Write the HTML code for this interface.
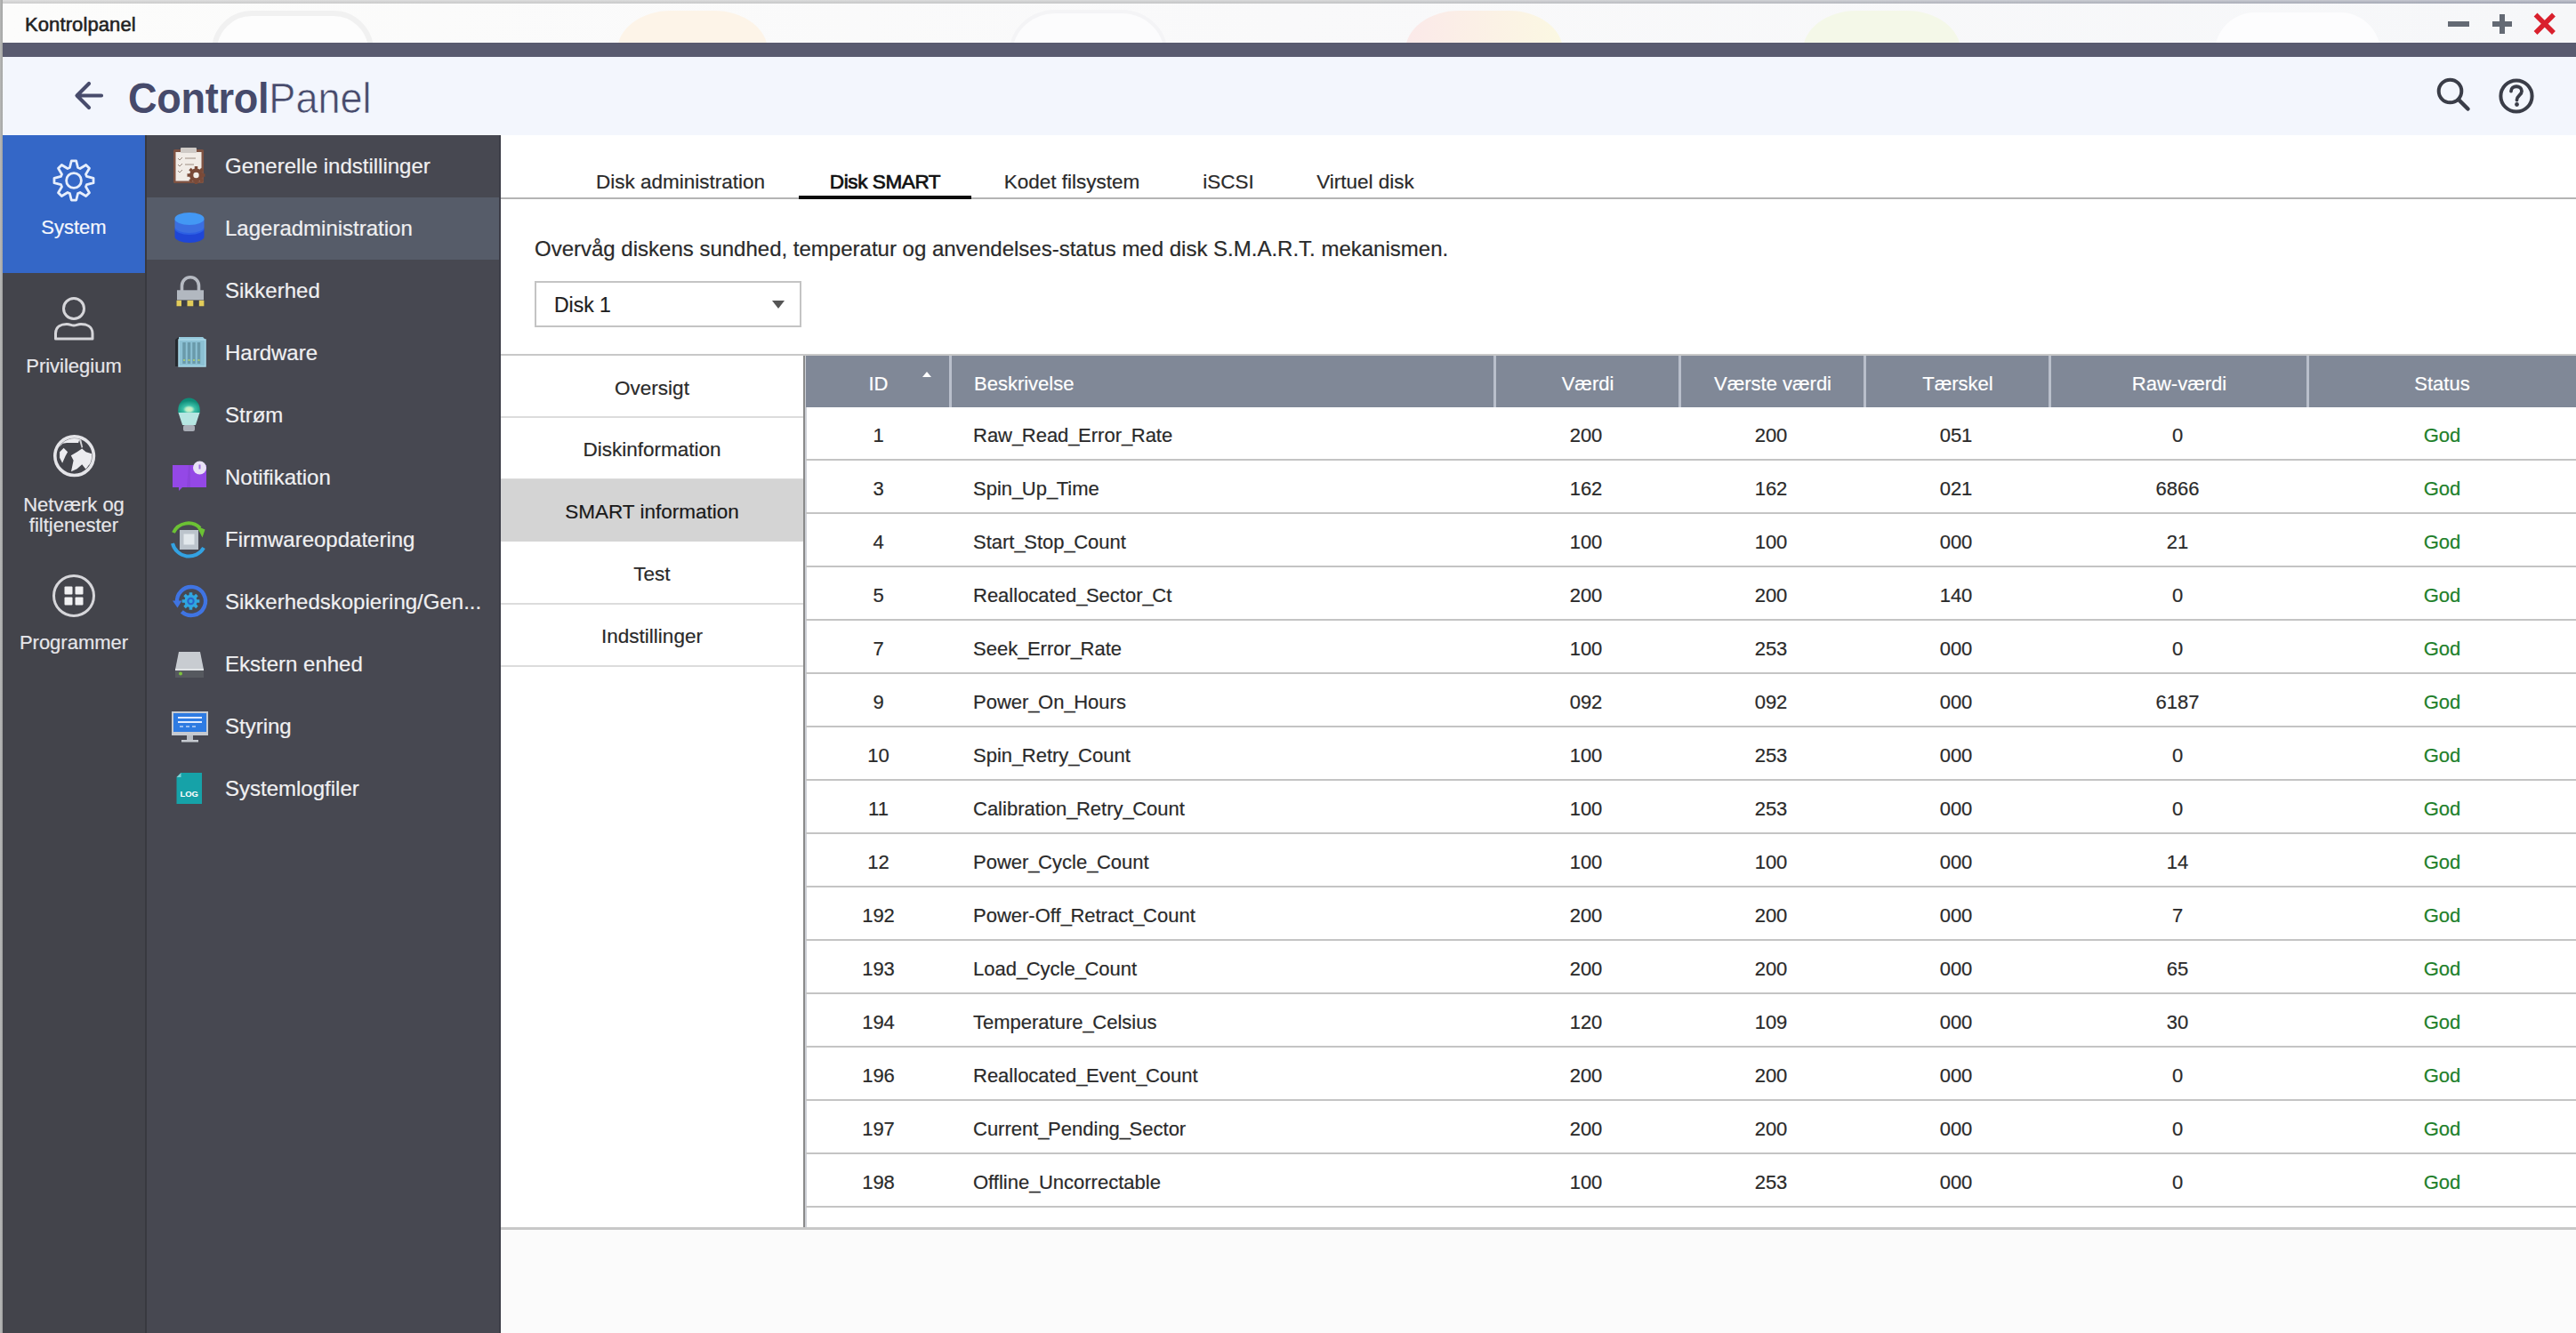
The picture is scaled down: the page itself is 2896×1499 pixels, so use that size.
<!DOCTYPE html>
<html><head><meta charset="utf-8">
<style>
*{margin:0;padding:0;box-sizing:border-box}
html,body{width:2896px;height:1499px;overflow:hidden;background:#c4c6c6;font-family:"Liberation Sans",sans-serif;color:#262626}
.abs{position:absolute}
#topstrip{left:0;top:0;width:2896px;height:4px;background:linear-gradient(180deg,rgba(255,255,255,0.35),rgba(255,255,255,0) 80%),linear-gradient(90deg,#cfcfcf 0%,#c6c7c8 50%,#a4a8b6 100%)}
#leftstrip{left:0;top:0;width:3px;height:1499px;background:linear-gradient(90deg,#b8b9b8,#a2a3a2)}
#titlebar{left:3px;top:4px;width:2893px;height:44px;background:linear-gradient(90deg,#fcfcfb 0%,#f9f9fa 50%,#f6f7f9 100%)}
#titletext{left:28px;top:14px;font-size:22px;line-height:28px;color:#222;letter-spacing:0.1px;-webkit-text-stroke:0.55px #222}
#darkbar{left:3px;top:48px;width:2893px;height:16px;background:#595b70}
#header{left:3px;top:64px;width:2893px;height:88px;background:#f3f6fd}
#cp{left:144px;top:82px;font-size:49px;line-height:56px;color:#464a6b;white-space:nowrap;transform:scaleX(0.92);transform-origin:0 0}
#cp b{letter-spacing:-0.3px;-webkit-text-stroke:0}
#cp span{letter-spacing:0px;margin-left:0px;-webkit-text-stroke:0.7px #f3f6fd}
#side1{left:3px;top:152px;width:160px;height:1347px;background:#43444b}
#sysblock{left:3px;top:152px;width:160px;height:155px;background:#3467c7}
#side2{left:165px;top:152px;width:398px;height:1347px;background:#474851}
#side1edge{left:163px;top:152px;width:2px;height:1347px;background:#38393f}
#side2edge{left:561px;top:152px;width:2px;height:1347px;background:#3c3d47}
.s1t{position:absolute;left:3px;width:160px;text-align:center;color:#e6e6ea;font-size:22px;line-height:23px;white-space:nowrap}
.s2row{position:absolute;left:163px;width:400px;height:70px}
.s2row .t{position:absolute;left:90px;top:0;line-height:70px;font-size:24px;color:#f0f0f2;white-space:nowrap}
.s2row svg{position:absolute;left:27px;top:13px}
#content{left:563px;top:152px;width:2333px;height:1230px;background:#fff}
#bottomarea{left:563px;top:1382px;width:2333px;height:117px;background:#fbfbfb}
.tab{position:absolute;top:190px;width:300px;text-align:center;font-size:22.5px;line-height:30px;color:#2a2a2a;white-space:nowrap}
#tabline{left:563px;top:222px;width:2333px;height:2px;background:#b4b4b4}
#tabactive{left:898px;top:220px;width:194px;height:4px;background:#0a0a0a}
#desc{left:601px;top:265px;font-size:24px;line-height:30px;color:#2a2a2a;white-space:nowrap}
#dd{left:601px;top:316px;width:300px;height:52px;border:2px solid #c4c4c4;background:#fff}
#ddtext{left:623px;top:328px;font-size:23px;line-height:30px;color:#1e1e1e}
#ddarrow{left:868px;top:338px;width:0;height:0;border-left:7.5px solid transparent;border-right:7.5px solid transparent;border-top:9px solid #555}
#toplinecontent{left:563px;top:398px;width:2333px;height:2px;background:#c8c8c8}
.lp{position:absolute;left:563px;width:340px;height:70px;padding-top:2px;text-align:center;font-size:22.5px;line-height:70px;color:#2a2a2a;white-space:nowrap}
.lpsep{position:absolute;left:563px;width:340px;height:2px;background:#dcdcdc}
#vline1{left:903px;top:400px;width:2px;height:982px;background:#8a8a8a}
#vline2{left:905px;top:400px;width:2px;height:982px;background:#cdd0d6}
#bottomline{left:563px;top:1380px;width:2333px;height:3px;background:#c8c8c8}
#thead{left:906px;top:400px;width:1990px;height:58px;background:#808897}
#thead .hc,#thead .hl{position:absolute;top:3px;height:57px;line-height:57px;font-size:22px;color:#fff;white-space:nowrap}
#thead .hc{text-align:center}
#thead .hl{padding-left:26px}
#thead .hsep{position:absolute;top:0;width:3px;height:58px;background:#b9bfcb}
#sortarrow{position:absolute;left:131px;top:18px;width:0;height:0;border-left:5px solid transparent;border-right:5px solid transparent;border-bottom:6px solid #fff}
.trow{left:906px;width:1990px;height:60px;border-bottom:2px solid #c4c4c4}
.trow .cc,.trow .cl{position:absolute;top:2px;height:58px;line-height:60px;font-size:22px;color:#2a2a2a;white-space:nowrap}
.trow .cc{text-align:center}
.trow .cl{padding-left:25px}
.trow .god{color:#21802a}

.u{letter-spacing:-1.5px}

body{-webkit-text-stroke:0.2px currentColor}

</style></head><body>
<div id="topstrip" class="abs"></div>
<div id="leftstrip" class="abs"></div>
<div id="titlebar" class="abs"></div>
<svg class="abs" style="left:3px;top:4px" width="2893" height="44" viewBox="3 4 2893 44">
 <rect x="241" y="15" width="176" height="90" rx="42" fill="#fdfdfd" stroke="#f1f1f1" stroke-width="6"/>
 <rect x="694" y="12" width="169" height="90" rx="60" fill="#fdf4e8"/>
 <rect x="1137" y="13" width="173" height="90" rx="50" fill="#fcfcfd" stroke="#f4f4f6" stroke-width="4"/>
 <defs><linearGradient id="gry" x1="0" x2="1"><stop offset="0" stop-color="#fbe9e9"/><stop offset="1" stop-color="#fbf8e2"/></linearGradient></defs>
 <rect x="1580" y="12" width="177" height="90" rx="60" fill="url(#gry)"/>
 <rect x="2027" y="12" width="177" height="90" rx="60" fill="#f4f8e8"/>
 <rect x="2490" y="14" width="186" height="90" rx="45" fill="#fdfdfe"/>
</svg>
<div id="titletext" class="abs">Kontrolpanel</div>
<svg class="abs" style="left:2740px;top:8px" width="150" height="40" viewBox="2740 8 150 40">
 <rect x="2752" y="24" width="24" height="6" fill="#646a74"/>
 <rect x="2802" y="24" width="22" height="6" fill="#646a74"/>
 <rect x="2810" y="16" width="6" height="22" fill="#646a74"/>
 <path d="M2852.5 18.5 L2869 35 M2869 18.5 L2852.5 35" stroke="#d9202d" stroke-width="5.5" stroke-linecap="square"/>
</svg>
<div id="darkbar" class="abs"></div>
<div id="header" class="abs"></div>
<svg class="abs" style="left:70px;top:80px" width="60" height="56" viewBox="70 80 60 56">
 <path d="M114 107.5 H87 M100 94 L86.5 107.5 L100 121" stroke="#484c6c" stroke-width="4.2" fill="none" stroke-linecap="round" stroke-linejoin="round"/>
</svg>
<div id="cp" class="abs"><b>Control</b><span>Panel</span></div>
<svg class="abs" style="left:2720px;top:75px" width="150" height="65" viewBox="2720 75 150 65">
 <circle cx="2754.5" cy="102.5" r="12.8" stroke="#3a3d48" stroke-width="4" fill="none"/>
 <path d="M2764 112 L2774.5 122.5" stroke="#3a3d48" stroke-width="4.5" stroke-linecap="round"/>
 <circle cx="2829" cy="108" r="17.6" stroke="#3a3d48" stroke-width="4" fill="none"/>
 <path d="M2823 102.5 C2823 95.5 2835 95.5 2835 102.5 C2835 107 2829.5 107.5 2829.5 112.5" stroke="#3a3d48" stroke-width="3.8" fill="none" stroke-linecap="round"/>
 <circle cx="2829.5" cy="117.5" r="2.4" fill="#3a3d48"/>
</svg>
<div id="side1" class="abs"></div>
<div id="sysblock" class="abs"></div>
<svg class="abs" style="left:53px;top:173px" width="60" height="60" viewBox="-30 -30 60 60">
 <path id="gearp" d="M-4.57 -14.50 L-2.71 -22.03 L2.71 -22.03 L4.57 -14.50 L7.02 -13.48 L13.67 -17.49 L17.49 -13.67 L13.48 -7.02 L14.50 -4.57 L22.03 -2.71 L22.03 2.71 L14.50 4.57 L13.48 7.02 L17.49 13.67 L13.67 17.49 L7.02 13.48 L4.57 14.50 L2.71 22.03 L-2.71 22.03 L-4.57 14.50 L-7.02 13.48 L-13.67 17.49 L-17.49 13.67 L-13.48 7.02 L-14.50 4.57 L-22.03 2.71 L-22.03 -2.71 L-14.50 -4.57 L-13.48 -7.02 L-17.49 -13.67 L-13.67 -17.49 L-7.02 -13.48 Z" fill="none" stroke="#e6eefc" stroke-width="2.8" stroke-linejoin="round"/>
 <circle cx="0" cy="0" r="8.4" fill="none" stroke="#e6eefc" stroke-width="2.8"/>
</svg>
<div class="s1t" style="top:244px;color:#f4f7fd">System</div>
<svg class="abs" style="left:53px;top:325px" width="60" height="65" viewBox="0 0 60 65">
 <circle cx="30" cy="22" r="11.5" fill="none" stroke="#d6d6da" stroke-width="3"/>
 <path d="M9.5 56 V50 C9.5 42 16 39.5 22 39.5 C26 39.5 27 41 30 41 C33 41 34 39.5 38 39.5 C44 39.5 51 42 51 50 V56 Z" fill="none" stroke="#d6d6da" stroke-width="3" stroke-linejoin="round"/>
</svg>
<div class="s1t" style="top:400px">Privilegium</div>
<svg class="abs" style="left:53px;top:483px" width="60" height="60" viewBox="-30.6 -29.7 60 60">
 <defs><clipPath id="gclip"><circle cx="0" cy="0" r="19.6"/></clipPath></defs>
 <circle cx="0" cy="0" r="21.8" fill="none" stroke="#e4e4e8" stroke-width="3.6"/>
 <g clip-path="url(#gclip)" fill="#ececf0">
  <path d="M-22 -10 L-16.5 -10.5 L-13 -14 L-8.5 -14.8 L4.5 -14.8 L6.5 -21 L-22 -21 Z"/>
  <path d="M4.5 -21 L7 -21 L9.5 -10 L8.2 -8.6 Z" opacity="0.85"/>
  <path d="M-16.5 -4.5 L-12 -9 L-7.5 -4.5 L-10 0 L-13.5 8 L-16.5 2 Z"/>
  <path d="M-3.8 -0.5 L3 -4.5 L8.6 -8.3 L13 -4.5 L21 -2 L21 8 L16 10.5 L13 15 L8.6 9.5 L3 14.5 L-3.6 17.5 L-1 5 Z"/>
 </g>
</svg>
<div class="s1t" style="top:556px">Netværk og</div>
<div class="s1t" style="top:579px">filtjenester</div>
<svg class="abs" style="left:53px;top:640px" width="60" height="60" viewBox="-30 -30 60 60">
 <circle cx="0" cy="0" r="22.5" fill="none" stroke="#d6d6da" stroke-width="3"/>
 <rect x="-10.5" y="-10.5" width="9" height="9" rx="1" fill="#f0f0f2"/>
 <rect x="1.5" y="-10.5" width="9" height="9" rx="1" fill="#f0f0f2"/>
 <rect x="-10.5" y="1.5" width="9" height="9" rx="1" fill="#f0f0f2"/>
 <rect x="1.5" y="1.5" width="9" height="9" rx="1" fill="#f0f0f2"/>
</svg>
<div class="s1t" style="top:711px">Programmer</div>
<div id="side2" class="abs"></div>
<div class="s2row" style="top:222px;background:#565c69"></div>
<!--S2ROWS-->
<div class="s2row" style="top:152px"><svg width="46" height="44" viewBox="0 0 46 44"><rect x="5" y="3" width="34" height="38" rx="1.5" fill="#7d5242"/><rect x="7.5" y="6" width="29" height="32.5" fill="#f1ece7"/><rect x="13" y="1" width="18" height="6" rx="1" fill="#cfcac6"/>
<path d="M10 13 l2 2 l3 -3 M10 20 l2 2 l3 -3 M10 27 l2 2 l3 -3" stroke="#9a8a80" stroke-width="1" fill="none"/><path d="M18 13 h12 M18 20 h10" stroke="#b9aca4" stroke-width="1.5"/>
<g transform="translate(30.5,32)"><circle r="7.5" fill="#7a4a38"/><path d="M0 -10 V10 M-10 0 H10 M-7 -7 L7 7 M7 -7 L-7 7" stroke="#7a4a38" stroke-width="3.5"/><circle r="3.2" fill="#f3eee9"/></g></svg><div class="t">Generelle indstillinger</div></div>
<div class="s2row" style="top:222px"><svg width="46" height="44" viewBox="0 0 46 44"><path d="M6.5 22 v9 a16.5 7 0 0 0 33 0 v-9 z" fill="#1f46d6"/><ellipse cx="23" cy="22" rx="16.5" ry="7" fill="#2c5fe3"/><path d="M6.5 11 v9 a16.5 7 0 0 0 33 0 v-9 z" fill="#3b6ee0"/><ellipse cx="23" cy="11" rx="16.5" ry="7" fill="#4398f4"/></svg><div class="t">Lageradministration</div></div>
<div class="s2row" style="top:292px"><svg width="46" height="44" viewBox="0 0 46 44"><path d="M14.5 22 V16.25 a9.5 9.5 0 0 1 19 0 V22" stroke="#b6bac2" stroke-width="3.6" fill="none"/><rect x="9" y="21.3" width="30" height="11.5" fill="#b2b8c0"/><rect x="8.5" y="32.5" width="31" height="7" fill="#3e3f45"/><rect x="8.5" y="32.8" width="5.5" height="6.5" fill="#e2cc5a"/><rect x="20.5" y="32.8" width="6.8" height="6.5" fill="#e2cc5a"/><rect x="33.8" y="32.8" width="5.6" height="6.5" fill="#e2cc5a"/></svg><div class="t">Sikkerhed</div></div>
<div class="s2row" style="top:362px"><svg width="46" height="44" viewBox="0 0 46 44"><path d="M11 4 h27 l3 3 v30 h-30 z" fill="#96cadd"/><path d="M7 7 l4 -3 v33 h-4 z" fill="#25292e"/><rect x="11" y="7" width="30" height="30" fill="#8cc1d4" stroke="#a9d8e8" stroke-width="1.5"/><path d="M17 10 v24 M22.5 10 v24 M28 10 v24 M33.5 10 v24" stroke="#6a9aaa" stroke-width="3.5"/><path d="M16 30 h20" stroke="#b9d66a" stroke-width="1.5" stroke-dasharray="2 3.5"/></svg><div class="t">Hardware</div></div>
<div class="s2row" style="top:432px"><svg width="46" height="44" viewBox="0 0 46 44"><defs><radialGradient id="bulbg" cx="0.5" cy="0.78" r="0.6"><stop offset="0" stop-color="#d8f0c0"/><stop offset="0.25" stop-color="#b8ecc8"/><stop offset="0.45" stop-color="#3cc0a8"/><stop offset="1" stop-color="#0f8c78"/></radialGradient></defs><path d="M10.2 19 V16 A12.3 13.5 0 0 1 34.8 16 V19 z" fill="url(#bulbg)"/><path d="M10.5 19 h24 l-4.6 14 h-14.8 z" fill="#b6e6e2"/><rect x="16" y="33" width="13" height="7" rx="2" fill="#a8adb6"/></svg><div class="t">Strøm</div></div>
<div class="s2row" style="top:502px"><svg width="46" height="44" viewBox="0 0 46 44"><path d="M4 8 h38 v25 h-27 l-4 4 v-4 h-7 z" fill="#9448e6"/><path d="M22 8 h2 v25 h-4 z" fill="#8440d0" opacity="0.5"/><circle cx="34.5" cy="11" r="7.5" fill="#e9e2f6"/><path d="M34.5 7.5 v5" stroke="#a070e0" stroke-width="2"/></svg><div class="t">Notifikation</div></div>
<div class="s2row" style="top:572px"><svg width="46" height="44" viewBox="0 0 46 44"><path d="M5 14 A18.5 18.5 0 0 1 35 9" stroke="#6cc234" stroke-width="4" fill="none"/><path d="M31 6.5 l9.5 4 l-3 9 z" fill="#6cc234"/><path d="M4 26 A19 19 0 0 0 39 31" stroke="#33a2e2" stroke-width="4" fill="none"/><rect x="12" y="11" width="21" height="22" fill="#bcc4cc"/><rect x="16.5" y="15.5" width="12" height="12" fill="#e2e8ec"/></svg><div class="t">Firmwareopdatering</div></div>
<div class="s2row" style="top:642px"><svg width="46" height="44" viewBox="0 0 46 44"><path d="M9.2 23.5 A16 16 0 1 1 14.3 32.9" stroke="#3f74e2" stroke-width="4.4" fill="none"/><path d="M4 20.5 L14.5 20.5 L9.5 28.5 Z" fill="#3f74e2"/><g transform="translate(24.5,21)"><path d="M-1.86 -6.95 L-1.74 -9.85 L1.74 -9.85 L1.86 -6.95 L3.60 -6.24 L5.74 -8.19 L8.19 -5.74 L6.24 -3.60 L6.95 -1.86 L9.85 -1.74 L9.85 1.74 L6.95 1.86 L6.24 3.60 L8.19 5.74 L5.74 8.19 L3.60 6.24 L1.86 6.95 L1.74 9.85 L-1.74 9.85 L-1.86 6.95 L-3.60 6.24 L-5.74 8.19 L-8.19 5.74 L-6.24 3.60 L-6.95 1.86 L-9.85 1.74 L-9.85 -1.74 L-6.95 -1.86 L-6.24 -3.60 L-8.19 -5.74 L-5.74 -8.19 L-3.60 -6.24 Z" fill="#2fa6e0"/><circle r="4.2" fill="#2a62c8"/><circle r="2.2" fill="#2fa6e0"/></g></svg><div class="t">Sikkerhedskopiering/Gen...</div></div>
<div class="s2row" style="top:712px"><svg width="46" height="44" viewBox="0 0 46 44"><path d="M11 8 h24 l4 20 h-32 z" fill="#c8ccd1"/><rect x="7" y="28" width="32" height="9" fill="#56595f"/><rect x="7" y="27" width="32" height="2" fill="#e0e3e6"/><circle cx="13" cy="32.5" r="2" fill="#7dc33c"/></svg><div class="t">Ekstern enhed</div></div>
<div class="s2row" style="top:782px"><svg width="46" height="44" viewBox="0 0 46 44"><rect x="3" y="5" width="41" height="27" fill="#c6cad0"/><rect x="5" y="7" width="37" height="21" fill="#2e7be2"/><path d="M10 12 h27 M10 17 h27" stroke="#dfeaff" stroke-width="2"/><path d="M12 22 h4 M19 22 h4 M26 22 h4" stroke="#bcd4f8" stroke-width="1.5"/><rect x="20" y="32" width="7" height="5" fill="#b6bbc2"/><rect x="14" y="37" width="19" height="2.5" fill="#c6cad0"/></svg><div class="t">Styring</div></div>
<div class="s2row" style="top:852px"><svg width="46" height="44" viewBox="0 0 46 44"><path d="M13.5 4 h23.5 v35 h-28.5 v-30 z" fill="#16a2a8"/><path d="M8.5 9 h5 v-5 z" fill="#7fd0d4"/><text x="22.7" y="31" font-family="Liberation Sans" font-weight="bold" font-size="9.5" fill="#fff" text-anchor="middle">LOG</text></svg><div class="t">Systemlogfiler</div></div>
<!--/S2ROWS-->
<div id="side2edge" class="abs"></div>
<div id="side1edge" class="abs"></div>
<div id="content" class="abs"></div>
<div id="bottomarea" class="abs"></div>
<div class="tab" style="left:615px">Disk administration</div>
<div class="tab" style="left:845px;color:#111;letter-spacing:-0.4px;-webkit-text-stroke:0.7px #111">Disk SMART</div>
<div class="tab" style="left:1055px">Kodet filsystem</div>
<div class="tab" style="left:1231px">iSCSI</div>
<div class="tab" style="left:1385px">Virtuel disk</div>
<div id="tabline" class="abs"></div>
<div id="tabactive" class="abs"></div>
<div id="desc" class="abs">Overvåg diskens sundhed, temperatur og anvendelses-status med disk S.M.A.R.T. mekanismen.</div>
<div id="dd" class="abs"></div>
<div id="ddtext" class="abs">Disk 1</div>
<div id="ddarrow" class="abs"></div>
<div id="toplinecontent" class="abs"></div>
<div class="lp" style="top:400px">Oversigt</div>
<div class="lpsep" style="top:468px"></div>
<div class="lp" style="top:469px">Diskinformation</div>
<div class="lpsep" style="top:538px"></div>
<div class="lp" style="top:539px;background:#d4d4d4;color:#1a1a1a">SMART information</div>
<div class="lp" style="top:609px">Test</div>
<div class="lpsep" style="top:678px"></div>
<div class="lp" style="top:679px">Indstillinger</div>
<div class="lpsep" style="top:748px"></div>
<div id="vline1" class="abs"></div>
<div id="vline2" class="abs"></div>
<div id="bottomline" class="abs"></div>
<div id="thead" class="abs">
<div class="hc" style="left:0px;width:163px">ID</div>
<div class="hl" style="left:163px;width:612px">Beskrivelse</div>
<div class="hc" style="left:775px;width:208px">Værdi</div>
<div class="hc" style="left:983px;width:208px">Værste værdi</div>
<div class="hc" style="left:1191px;width:208px">Tærskel</div>
<div class="hc" style="left:1399px;width:290px">Raw-værdi</div>
<div class="hc" style="left:1689px;width:301px">Status</div>
<div class="hsep" style="left:161px"></div>
<div class="hsep" style="left:773px"></div>
<div class="hsep" style="left:981px"></div>
<div class="hsep" style="left:1189px"></div>
<div class="hsep" style="left:1397px"></div>
<div class="hsep" style="left:1687px"></div>
<div id="sortarrow"></div>
</div>
<div class="trow abs" style="top:458px">
<div class="cc" style="left:0px;width:163px">1</div>
<div class="cl" style="left:163px;width:612px">Raw<span class="u">_</span>Read<span class="u">_</span>Error<span class="u">_</span>Rate</div>
<div class="cc" style="left:773px;width:208px">200</div>
<div class="cc" style="left:981px;width:208px">200</div>
<div class="cc" style="left:1189px;width:208px">051</div>
<div class="cc" style="left:1397px;width:290px">0</div>
<div class="cc god" style="left:1689px;width:301px">God</div>
</div>
<div class="trow abs" style="top:518px">
<div class="cc" style="left:0px;width:163px">3</div>
<div class="cl" style="left:163px;width:612px">Spin<span class="u">_</span>Up<span class="u">_</span>Time</div>
<div class="cc" style="left:773px;width:208px">162</div>
<div class="cc" style="left:981px;width:208px">162</div>
<div class="cc" style="left:1189px;width:208px">021</div>
<div class="cc" style="left:1397px;width:290px">6866</div>
<div class="cc god" style="left:1689px;width:301px">God</div>
</div>
<div class="trow abs" style="top:578px">
<div class="cc" style="left:0px;width:163px">4</div>
<div class="cl" style="left:163px;width:612px">Start<span class="u">_</span>Stop<span class="u">_</span>Count</div>
<div class="cc" style="left:773px;width:208px">100</div>
<div class="cc" style="left:981px;width:208px">100</div>
<div class="cc" style="left:1189px;width:208px">000</div>
<div class="cc" style="left:1397px;width:290px">21</div>
<div class="cc god" style="left:1689px;width:301px">God</div>
</div>
<div class="trow abs" style="top:638px">
<div class="cc" style="left:0px;width:163px">5</div>
<div class="cl" style="left:163px;width:612px">Reallocated<span class="u">_</span>Sector<span class="u">_</span>Ct</div>
<div class="cc" style="left:773px;width:208px">200</div>
<div class="cc" style="left:981px;width:208px">200</div>
<div class="cc" style="left:1189px;width:208px">140</div>
<div class="cc" style="left:1397px;width:290px">0</div>
<div class="cc god" style="left:1689px;width:301px">God</div>
</div>
<div class="trow abs" style="top:698px">
<div class="cc" style="left:0px;width:163px">7</div>
<div class="cl" style="left:163px;width:612px">Seek<span class="u">_</span>Error<span class="u">_</span>Rate</div>
<div class="cc" style="left:773px;width:208px">100</div>
<div class="cc" style="left:981px;width:208px">253</div>
<div class="cc" style="left:1189px;width:208px">000</div>
<div class="cc" style="left:1397px;width:290px">0</div>
<div class="cc god" style="left:1689px;width:301px">God</div>
</div>
<div class="trow abs" style="top:758px">
<div class="cc" style="left:0px;width:163px">9</div>
<div class="cl" style="left:163px;width:612px">Power<span class="u">_</span>On<span class="u">_</span>Hours</div>
<div class="cc" style="left:773px;width:208px">092</div>
<div class="cc" style="left:981px;width:208px">092</div>
<div class="cc" style="left:1189px;width:208px">000</div>
<div class="cc" style="left:1397px;width:290px">6187</div>
<div class="cc god" style="left:1689px;width:301px">God</div>
</div>
<div class="trow abs" style="top:818px">
<div class="cc" style="left:0px;width:163px">10</div>
<div class="cl" style="left:163px;width:612px">Spin<span class="u">_</span>Retry<span class="u">_</span>Count</div>
<div class="cc" style="left:773px;width:208px">100</div>
<div class="cc" style="left:981px;width:208px">253</div>
<div class="cc" style="left:1189px;width:208px">000</div>
<div class="cc" style="left:1397px;width:290px">0</div>
<div class="cc god" style="left:1689px;width:301px">God</div>
</div>
<div class="trow abs" style="top:878px">
<div class="cc" style="left:0px;width:163px">11</div>
<div class="cl" style="left:163px;width:612px">Calibration<span class="u">_</span>Retry<span class="u">_</span>Count</div>
<div class="cc" style="left:773px;width:208px">100</div>
<div class="cc" style="left:981px;width:208px">253</div>
<div class="cc" style="left:1189px;width:208px">000</div>
<div class="cc" style="left:1397px;width:290px">0</div>
<div class="cc god" style="left:1689px;width:301px">God</div>
</div>
<div class="trow abs" style="top:938px">
<div class="cc" style="left:0px;width:163px">12</div>
<div class="cl" style="left:163px;width:612px">Power<span class="u">_</span>Cycle<span class="u">_</span>Count</div>
<div class="cc" style="left:773px;width:208px">100</div>
<div class="cc" style="left:981px;width:208px">100</div>
<div class="cc" style="left:1189px;width:208px">000</div>
<div class="cc" style="left:1397px;width:290px">14</div>
<div class="cc god" style="left:1689px;width:301px">God</div>
</div>
<div class="trow abs" style="top:998px">
<div class="cc" style="left:0px;width:163px">192</div>
<div class="cl" style="left:163px;width:612px">Power-Off<span class="u">_</span>Retract<span class="u">_</span>Count</div>
<div class="cc" style="left:773px;width:208px">200</div>
<div class="cc" style="left:981px;width:208px">200</div>
<div class="cc" style="left:1189px;width:208px">000</div>
<div class="cc" style="left:1397px;width:290px">7</div>
<div class="cc god" style="left:1689px;width:301px">God</div>
</div>
<div class="trow abs" style="top:1058px">
<div class="cc" style="left:0px;width:163px">193</div>
<div class="cl" style="left:163px;width:612px">Load<span class="u">_</span>Cycle<span class="u">_</span>Count</div>
<div class="cc" style="left:773px;width:208px">200</div>
<div class="cc" style="left:981px;width:208px">200</div>
<div class="cc" style="left:1189px;width:208px">000</div>
<div class="cc" style="left:1397px;width:290px">65</div>
<div class="cc god" style="left:1689px;width:301px">God</div>
</div>
<div class="trow abs" style="top:1118px">
<div class="cc" style="left:0px;width:163px">194</div>
<div class="cl" style="left:163px;width:612px">Temperature<span class="u">_</span>Celsius</div>
<div class="cc" style="left:773px;width:208px">120</div>
<div class="cc" style="left:981px;width:208px">109</div>
<div class="cc" style="left:1189px;width:208px">000</div>
<div class="cc" style="left:1397px;width:290px">30</div>
<div class="cc god" style="left:1689px;width:301px">God</div>
</div>
<div class="trow abs" style="top:1178px">
<div class="cc" style="left:0px;width:163px">196</div>
<div class="cl" style="left:163px;width:612px">Reallocated<span class="u">_</span>Event<span class="u">_</span>Count</div>
<div class="cc" style="left:773px;width:208px">200</div>
<div class="cc" style="left:981px;width:208px">200</div>
<div class="cc" style="left:1189px;width:208px">000</div>
<div class="cc" style="left:1397px;width:290px">0</div>
<div class="cc god" style="left:1689px;width:301px">God</div>
</div>
<div class="trow abs" style="top:1238px">
<div class="cc" style="left:0px;width:163px">197</div>
<div class="cl" style="left:163px;width:612px">Current<span class="u">_</span>Pending<span class="u">_</span>Sector</div>
<div class="cc" style="left:773px;width:208px">200</div>
<div class="cc" style="left:981px;width:208px">200</div>
<div class="cc" style="left:1189px;width:208px">000</div>
<div class="cc" style="left:1397px;width:290px">0</div>
<div class="cc god" style="left:1689px;width:301px">God</div>
</div>
<div class="trow abs" style="top:1298px">
<div class="cc" style="left:0px;width:163px">198</div>
<div class="cl" style="left:163px;width:612px">Offline<span class="u">_</span>Uncorrectable</div>
<div class="cc" style="left:773px;width:208px">100</div>
<div class="cc" style="left:981px;width:208px">253</div>
<div class="cc" style="left:1189px;width:208px">000</div>
<div class="cc" style="left:1397px;width:290px">0</div>
<div class="cc god" style="left:1689px;width:301px">God</div>
</div>
</body></html>
